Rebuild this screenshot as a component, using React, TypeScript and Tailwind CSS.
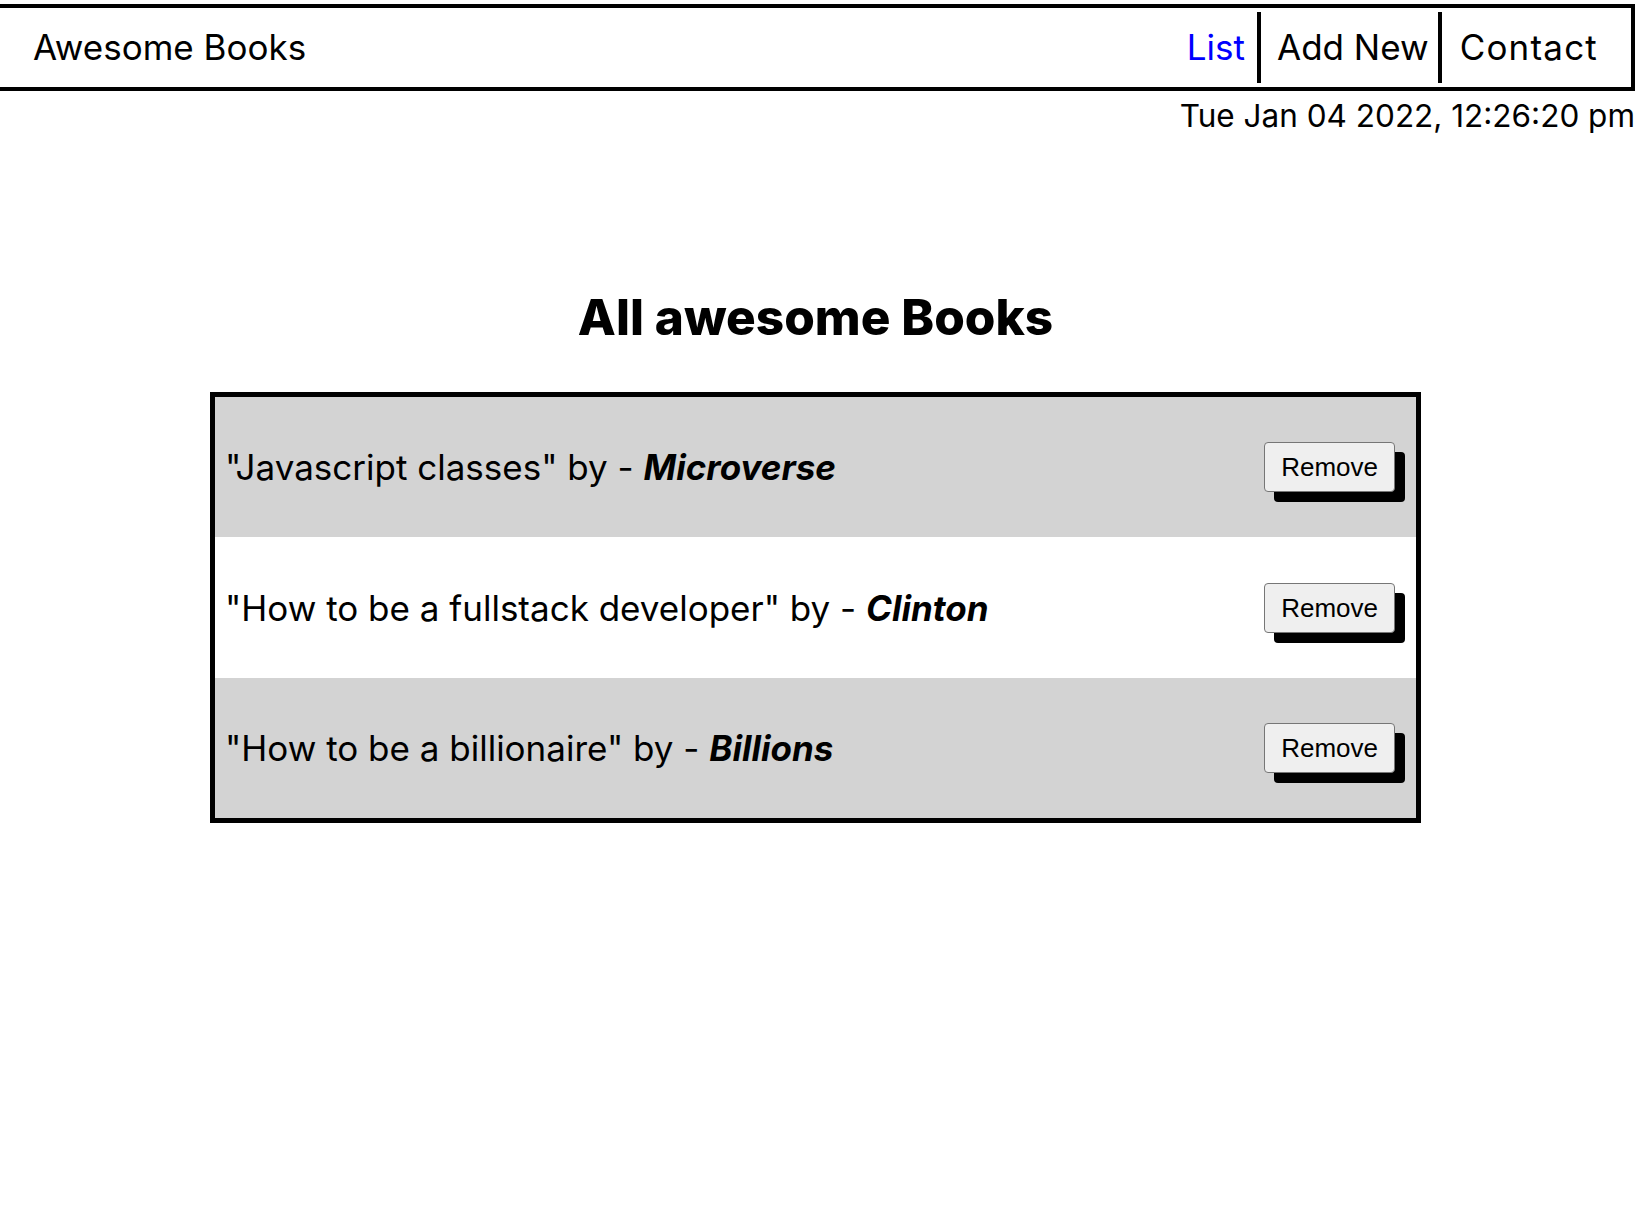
import React from "react";

const books = [
  { title: "Javascript classes", author: "Microverse" },
  { title: "How to be a fullstack developer", author: "Clinton" },
  { title: "How to be a billionaire", author: "Billions" },
];

export default function App() {
  return (
    <div className="w-[1631px] font-['Inter','Noto_Sans',sans-serif] text-black bg-white min-h-[1214px]">
      <header className="-mx-1 mt-1 h-[87px] border-4 border-black flex items-center justify-between">
        <a className="pl-[33px] text-[35px] leading-none">Awesome Books</a>
        <ul className="flex items-center mr-[33px]">
          <li className="h-[71px] flex items-center pl-4 pr-[12px] border-r-[4px] border-black text-[35px] text-[#0000ff]">List</li>
          <li className="h-[71px] flex items-center pl-[16px] pr-[9px] border-r-[4px] border-black text-[35px]">Add New</li>
          <li className="h-[71px] flex items-center pl-[18px] text-[35px] tracking-[1.2px]">Contact</li>
        </ul>
      </header>
      <div className="mt-[7px] -mr-[4px] text-right text-[31.5px] leading-[36px]">Tue Jan 04 2022, 12:26:20 pm</div>
      <main className="flex flex-col items-center">
        <h1 className="mt-[155px] text-[49.5px] leading-[56px] font-extrabold">All awesome Books</h1>
        <ul className="mt-[47px] w-[1211px] border-[5px] border-black">
          {books.map((b, i) => (
            <li
              key={i}
              className={`${i === 1 ? "h-[141px] bg-white" : "h-[140px] bg-[#d3d3d3]"} flex items-center justify-between pl-[10px] pr-[21px]`}
            >
              <p className="text-[35px] leading-[42px]">
                "{b.title}" by - <strong className="italic font-bold">{b.author}</strong>
              </p>
              <button className="bg-[#efefef] border border-[#767676] rounded-[4px] px-4 py-[9px] text-[26px] leading-[30px] font-['Liberation_Sans',Arial,sans-serif] shadow-[10px_10px_0_#000] text-black">
                Remove
              </button>
            </li>
          ))}
        </ul>
      </main>
    </div>
  );
}
